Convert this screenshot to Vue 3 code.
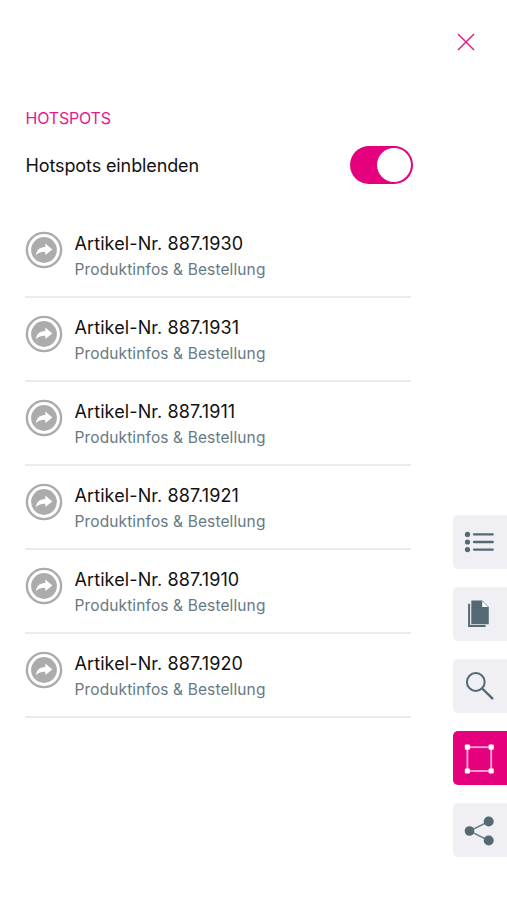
<script setup>
import { ref } from 'vue'

const visible = ref(true)
const articles = ['887.1930', '887.1931', '887.1911', '887.1921', '887.1910', '887.1920']
</script>

<template>
  <div class="screen">
    <main class="panel">
      <h1 class="heading">HOTSPOTS</h1>
      <div class="setting">
        <span class="label">Hotspots einblenden</span>
        <button class="switch" :class="{ on: visible }" role="switch" :aria-checked="visible" @click="visible = !visible">
          <span class="knob"></span>
        </button>
      </div>
      <ul class="list">
        <li v-for="nr in articles" :key="nr" class="row">
          <svg class="badge" width="38" height="38" viewBox="0 0 38 38">
            <circle cx="19" cy="19" r="17.1" fill="none" stroke="#acacac" stroke-width="2.4" />
            <circle cx="19" cy="19" r="12.9" fill="#acacac" />
            <path d="M11 24.5C11.2 19.3 14 16.1 20.3 15.9V12.6L27.3 18.6L20.3 24V20.7C15.8 20.5 13 21.6 11 24.5Z" fill="#fff" />
          </svg>
          <div class="text">
            <div class="title">Artikel-Nr. {{ nr }}</div>
            <div class="sub">Produktinfos &amp; Bestellung</div>
          </div>
        </li>
      </ul>
    </main>
    <aside class="side">
      <button class="close">
        <svg width="20" height="20" viewBox="0 0 20 20"><path d="M2 2L18 18M18 2L2 18" stroke="#e5198a" stroke-width="1.5" fill="none" /></svg>
      </button>
      <nav class="tabs">
        <button class="tab">
          <svg width="54" height="54" viewBox="0 0 54 54" fill="#546973">
            <circle cx="14.5" cy="19.4" r="2.6" /><circle cx="14.5" cy="27" r="2.6" /><circle cx="14.5" cy="34.6" r="2.6" />
            <path d="M21 19.4H39.7M21 27H39.7M21 34.6H39.7" stroke="#546973" stroke-width="2.3" stroke-linecap="round" />
          </svg>
        </button>
        <button class="tab">
          <svg width="54" height="54" viewBox="0 0 54 54">
            <path d="M16.1 16.8V39.1H32.6" fill="none" stroke="#546973" stroke-width="2" />
            <path d="M18.3 13.4H29.2L35.8 20.1V37.2H18.3Z" fill="#546973" />
            <path d="M29.2 14V20.1H35.2Z" fill="#f8f8fa" />
          </svg>
        </button>
        <button class="tab">
          <svg width="54" height="54" viewBox="0 0 54 54" fill="none" stroke="#546973">
            <circle cx="22.8" cy="23" r="8.9" stroke-width="2" />
            <path d="M29.2 29.5L39.3 39.4" stroke-width="2.4" stroke-linecap="round" />
          </svg>
        </button>
        <button class="tab active">
          <svg width="54" height="54" viewBox="0 0 54 54" fill="#fff">
            <rect x="14.4" y="16.2" width="23.8" height="23.8" fill="none" stroke="#f8a9d5" stroke-width="1.8" />
            <rect x="11.8" y="13.6" width="5.2" height="5.2" rx="1" /><rect x="35.6" y="13.6" width="5.2" height="5.2" rx="1" />
            <rect x="11.8" y="37.4" width="5.2" height="5.2" rx="1" /><rect x="35.6" y="37.4" width="5.2" height="5.2" rx="1" />
          </svg>
        </button>
        <button class="tab">
          <svg width="54" height="54" viewBox="0 0 54 54" fill="#546973">
            <path d="M35.7 18.5L16.5 28L35.7 37.5" fill="none" stroke="#728188" stroke-width="1.5" />
            <circle cx="16.5" cy="28" r="4.8" /><circle cx="35.7" cy="18.5" r="5" /><circle cx="35.7" cy="37.5" r="5" />
          </svg>
        </button>
      </nav>
    </aside>
  </div>
</template>

<style>
body { margin: 0; background: #fff; }
</style>

<style scoped>
.screen {
  box-sizing: border-box;
  width: 507px;
  height: 900px;
  display: flex;
  justify-content: space-between;
  overflow: hidden;
  font-family: Inter, "Liberation Sans", sans-serif;
  color: #111;
}
button { border: 0; padding: 0; margin: 0; background: none; }
svg { display: block; flex: none; }
.panel { width: 388px; padding: 108px 0 0 25px; }
.heading { margin: 0; padding-left: 0.5px; font-size: 16px; letter-spacing: -0.2px; line-height: 20px; font-weight: 400; color: #e5198a; }
.setting { display: flex; justify-content: space-between; align-items: center; height: 38px; margin-top: 18px; }
.label { padding-left: 0.5px; font-size: 18px; letter-spacing: -0.11px; }
.switch { width: 63px; height: 38px; border-radius: 19px; background: #c8c8c8; display: flex; align-items: center; padding: 0 2px; }
.switch.on { background: #e5007d; justify-content: flex-end; }
.knob { width: 34px; height: 34px; border-radius: 50%; background: #fff; }
.list { list-style: none; margin: 30px 0 0; padding: 0; width: 386px; }
.row { box-sizing: border-box; height: 84px; padding-top: 17px; display: flex; gap: 12px; border-bottom: 2px solid #ebebed; }
.badge { margin: 0 0 0 -0.5px; }
.title { font-size: 18px; letter-spacing: 0.1px; line-height: 24px; white-space: nowrap; }
.sub { font-size: 15.5px; letter-spacing: 0.12px; line-height: 20px; margin-top: 4px; color: #677983; white-space: nowrap; }
.text { margin-top: 1px; }
.side { width: 54px; display: flex; flex-direction: column; justify-content: space-between; padding: 32px 0 43px; }
.close { width: 20px; height: 20px; margin-left: 3px; }
.tabs { display: flex; flex-direction: column; gap: 18px; }
.tab { width: 54px; height: 54px; border-radius: 5px 0 0 5px; background: #efeff4; }
.tab.active { background: #e5007d; }
</style>
